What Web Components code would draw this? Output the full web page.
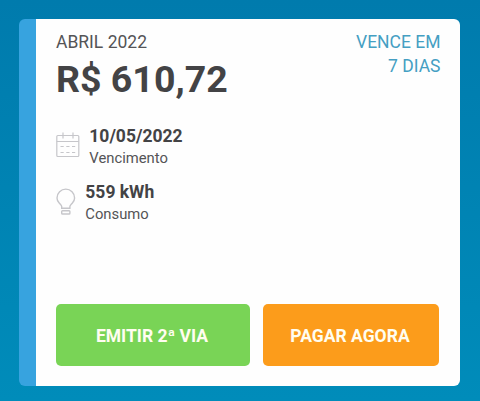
<!DOCTYPE html>
<html lang="pt-BR">
<head>
<meta charset="utf-8">
<title>Fatura</title>
<style>
html, body { margin: 0; height: 100%; }
body {
  box-sizing: border-box; height: 401px; padding: 19px 20px 15px 18.5px; overflow: hidden;
  background: linear-gradient(#007bad, #008cba);
  font-family: Roboto, "Liberation Sans", sans-serif; color: #434345;
}
</style>
</head>
<body>
<bill-card>
  <bill-header month="ABRIL 2022" amount="R$ 610,72"><span>VENCE EM<br>7 DIAS</span></bill-header>
  <bill-fact value="10/05/2022" label="Vencimento">
    <svg width="24" height="26" viewBox="0 0 24 26" fill="none" stroke="#c6c6ca" stroke-width="1.2">
      <rect x=".8" y="3.5" width="22" height="21" rx="1"/>
      <path d="M.8 9.5h22M7 .5v6M17 .5v6"/>
      <path d="M4.500 14.500h3.200M10.300 14.500h3.200M16 14.500h3.200M4.500 20.500h3.200M10.300 20.500h3.200M16 20.500h3.200"/>
    </svg>
  </bill-fact>
  <bill-fact value="559 kWh" label="Consumo">
    <svg width="20" height="28" viewBox="0 0 20 28" fill="none" stroke="#c6c6ca" stroke-width="1.4">
      <path d="M5.700 20.200v-1.700c0-1.100-1.200-2-2.500-3.500C1.800 13.500 1 11.700 1 9.900a8.800 8.800 0 0 1 17.600 0c0 1.800-.8 3.600-2.200 5.100-1.300 1.500-2.500 2.400-2.500 3.500v1.700z"/>
      <rect x="5.700" y="22.800" width="8.200" height="3.200" rx=".8"/>
    </svg>
  </bill-fact>
  <action-button slot="actions" style="--fill:#79d456;width:194px">EMITIR 2ª VIA</action-button>
  <action-button slot="actions" style="--fill:#fc9c1b;width:176px">PAGAR AGORA</action-button>
</bill-card>
<script>
class BillCard extends HTMLElement {
  constructor() {
    super();
    this.attachShadow({ mode: 'open' }).innerHTML = `
      <style>
        :host { display: flex; flex-direction: column; box-sizing: border-box; height: 367px; border-radius: 6px;
          padding: 11px 19.5px 20px 37.5px;
          background: linear-gradient(90deg, #37a3df 16.9px, #fefefe 16.9px); }
        footer { display: flex; gap: 13px; margin-top: auto; }
      </style>
      <slot></slot>
      <footer><slot name="actions"></slot></footer>`;
  }
}
class BillHeader extends HTMLElement {
  connectedCallback() {
    this.attachShadow({ mode: 'open' }).innerHTML = `
      <style>
        :host { display: flex; justify-content: space-between; height: 95px; }
        .month { font-size: 17.5px; line-height: 24px; color: #545456; }
        .amount { font-size: 37.5px; font-weight: 700; line-height: 48px; margin-top: 1px; }
        .due { font-size: 17.5px; line-height: 24px; text-align: right; color: #459fc3; }
      </style>
      <div><div class="month">${this.getAttribute('month')}</div><div class="amount">${this.getAttribute('amount')}</div></div>
      <div class="due"><slot></slot></div>`;
  }
}
class BillFact extends HTMLElement {
  connectedCallback() {
    this.attachShadow({ mode: 'open' }).innerHTML = `
      <style>
        :host { display: flex; align-items: flex-start; gap: 9.3px; height: 56px; }
        .icon { display: flex; padding-top: 7px; }
        .value { font-size: 17.5px; font-weight: 700; line-height: 23px; }
        .label { font-size: 14.8px; line-height: 20px; color: #545456; }
      </style>
      <div class="icon"><slot></slot></div>
      <div><div class="value">${this.getAttribute('value')}</div><div class="label">${this.getAttribute('label')}</div></div>`;
  }
}
class ActionButton extends HTMLElement {
  constructor() {
    super();
    this.attachShadow({ mode: 'open' }).innerHTML = `
      <style>
        :host { display: block; height: 62px; }
        button { all: unset; box-sizing: border-box; display: grid; place-items: center; width: 100%; height: 100%;
          border-radius: 5px; background: var(--fill); color: #fffdf0; font-size: 17.5px; font-weight: 700;
          padding: 2px 2px 0 0; }
      </style>
      <button><span><slot></slot></span></button>`;
  }
}
customElements.define('bill-card', BillCard);
customElements.define('bill-header', BillHeader);
customElements.define('bill-fact', BillFact);
customElements.define('action-button', ActionButton);
</script>
</body>
</html>
